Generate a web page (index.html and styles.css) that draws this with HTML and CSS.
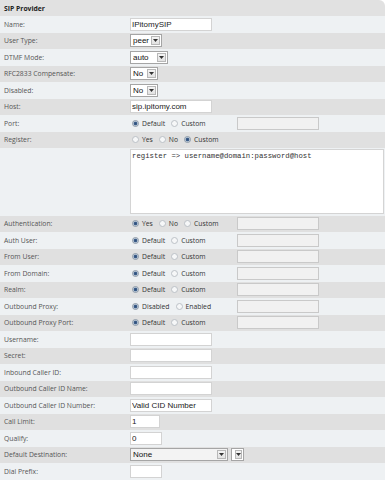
FILE: index.html
```html
<!DOCTYPE html>
<html>
<head>
<meta charset="utf-8">
<link rel="stylesheet" href="styles.css">
</head>
<body>
<div class="panel">
  <div class="panel-head">SIP Provider</div>
  <div class="row"><div class="label">Name:</div><div class="value"><input class="text w82" value="IPitomySIP"></div></div>
  <div class="row"><div class="label">User Type:</div><div class="value"><span class="select s-peer"><span class="sel-text">peer</span><span class="arrow"><svg width="5" height="3" viewBox="0 0 5 3"><path d="M0 0h5L2.5 3z" fill="#333"/></svg></span></span></div></div>
  <div class="row"><div class="label">DTMF Mode:</div><div class="value"><span class="select s-auto"><span class="sel-text">auto</span><span class="arrow"><svg width="5" height="3" viewBox="0 0 5 3"><path d="M0 0h5L2.5 3z" fill="#333"/></svg></span></span></div></div>
  <div class="row"><div class="label">RFC2833 Compensate:</div><div class="value"><span class="select s-no"><span class="sel-text">No</span><span class="arrow"><svg width="5" height="3" viewBox="0 0 5 3"><path d="M0 0h5L2.5 3z" fill="#333"/></svg></span></span></div></div>
  <div class="row"><div class="label">Disabled:</div><div class="value"><span class="select s-no"><span class="sel-text">No</span><span class="arrow"><svg width="5" height="3" viewBox="0 0 5 3"><path d="M0 0h5L2.5 3z" fill="#333"/></svg></span></span></div></div>
  <div class="row"><div class="label">Host:</div><div class="value"><input class="text w82" value="sip.ipitomy.com"></div></div>
  <div class="row"><div class="label">Port:</div><div class="value"><div class="radios"><span class="radio on"></span><span class="rl">Default</span><span class="radio"></span><span class="rl">Custom</span></div><input class="text w82 off"></div></div>
  <div class="row"><div class="label">Register:</div><div class="value"><div class="radios"><span class="radio"></span><span class="rl">Yes</span><span class="radio"></span><span class="rl">No</span><span class="radio on"></span><span class="rl">Custom</span></div></div></div>
  <div class="row tall"><div class="label"></div><div class="value"><textarea class="area">register =&gt; username@domain:password@host</textarea></div></div>
  <div class="row"><div class="label">Authentication:</div><div class="value"><div class="radios"><span class="radio on"></span><span class="rl">Yes</span><span class="radio"></span><span class="rl">No</span><span class="radio"></span><span class="rl">Custom</span></div><input class="text w82 off"></div></div>
  <div class="row"><div class="label">Auth User:</div><div class="value"><div class="radios"><span class="radio on"></span><span class="rl">Default</span><span class="radio"></span><span class="rl">Custom</span></div><input class="text w82 off"></div></div>
  <div class="row"><div class="label">From User:</div><div class="value"><div class="radios"><span class="radio on"></span><span class="rl">Default</span><span class="radio"></span><span class="rl">Custom</span></div><input class="text w82 off"></div></div>
  <div class="row"><div class="label">From Domain:</div><div class="value"><div class="radios"><span class="radio on"></span><span class="rl">Default</span><span class="radio"></span><span class="rl">Custom</span></div><input class="text w82 off"></div></div>
  <div class="row"><div class="label">Realm:</div><div class="value"><div class="radios"><span class="radio on"></span><span class="rl">Default</span><span class="radio"></span><span class="rl">Custom</span></div><input class="text w82 off"></div></div>
  <div class="row"><div class="label">Outbound Proxy:</div><div class="value"><div class="radios"><span class="radio on"></span><span class="rl">Disabled</span><span class="radio"></span><span class="rl">Enabled</span></div><input class="text w82 off"></div></div>
  <div class="row"><div class="label">Outbound Proxy Port:</div><div class="value"><div class="radios"><span class="radio on"></span><span class="rl">Default</span><span class="radio"></span><span class="rl">Custom</span></div><input class="text w82 off"></div></div>
  <div class="row"><div class="label">Username:</div><div class="value"><input class="text w82"></div></div>
  <div class="row"><div class="label">Secret:</div><div class="value"><input class="text w82"></div></div>
  <div class="row"><div class="label">Inbound Caller ID:</div><div class="value"><input class="text w82"></div></div>
  <div class="row"><div class="label">Outbound Caller ID Name:</div><div class="value"><input class="text w82"></div></div>
  <div class="row"><div class="label">Outbound Caller ID Number:</div><div class="value"><input class="text w82" value="Valid CID Number"></div></div>
  <div class="row"><div class="label">Call Limit:</div><div class="value"><input class="text w30" value="1"></div></div>
  <div class="row"><div class="label">Qualify:</div><div class="value"><input class="text w32" value="0"></div></div>
  <div class="row"><div class="label">Default Destination:</div><div class="value dest"><span class="select s-none"><span class="sel-text">None</span><span class="arrow"><svg width="5" height="3" viewBox="0 0 5 3"><path d="M0 0h5L2.5 3z" fill="#333"/></svg></span></span><span class="select s-empty"><span class="arrow"><svg width="5" height="3" viewBox="0 0 5 3"><path d="M0 0h5L2.5 3z" fill="#333"/></svg></span></span></div></div>
  <div class="row"><div class="label">Dial Prefix:</div><div class="value"><input class="text w32"></div></div>
</div>
</body>
</html>
```
FILE: styles.css
```css
html, body {
  margin: 0;
  padding: 0;
  background: #ffffff;
}
body {
  font-family: "Open Sans", "DejaVu Sans", sans-serif;
  font-size: 6.8px;
  color: #555;
}
.panel {
  width: 385px;
  display: flex;
  flex-direction: column;
}
.panel-head {
  height: 16px;
  background: #e1e1e1;
  border-top-right-radius: 6px;
  font-weight: bold;
  color: #222;
  padding-left: 4px;
  display: flex;
  align-items: center;
}
.row {
  display: grid;
  grid-template-columns: 130px 1fr;
  height: 16.5px;
  box-sizing: border-box;
  align-items: center;
  background: #e0e0e0;
}
.row:nth-child(even) {
  background: #eef1f3;
}
.row.tall {
  height: 67.5px;
}
.label {
  padding-left: 4px;
  white-space: nowrap;
}
.value {
  display: flex;
  align-items: center;
  height: 100%;
}
.text {
  box-sizing: border-box;
  height: 13px;
  border: 1px solid #d3d3d3;
  background: #fff;
  font-family: "Liberation Sans", Arial, sans-serif;
  font-size: 8px;
  color: #222;
  padding: 0 1px;
  margin: 0;
  outline: none;
}
.text.off {
  background: #f1f1f1;
  border-color: #c9c9c9;
}
.w82 { width: 82px; }
.w30 { width: 30px; }
.w32 { width: 32px; }
.radios {
  width: 107px;
  display: flex;
  align-items: center;
  color: #333;
}
.radio {
  box-sizing: border-box;
  width: 7px;
  height: 7px;
  border-radius: 50%;
  border: 1px solid #bcc1c7;
  background: #f6f7f8;
  margin: 0 3px 0 2px;
  flex: none;
}
.radio.on {
  border-color: #8d9aa8;
  background: radial-gradient(circle, #2f4e78 0, #3d5f8c 1.4px, #c3cfdc 2.2px);
}
.rl {
  margin-right: 4px;
}
.select {
  box-sizing: border-box;
  height: 13px;
  border: 1px solid #a5a5a5;
  background: #fff;
  display: flex;
  align-items: center;
  justify-content: space-between;
  font-family: "Liberation Sans", Arial, sans-serif;
  font-size: 8px;
  color: #111;
  padding-left: 2px;
  padding-right: 1px;
}
.s-peer { width: 32px; }
.s-auto { width: 38px; }
.s-no { width: 28px; }
.s-none { width: 98px; background: #f3f3f3; }
.s-empty { width: 13px; margin-left: 3px; padding-left: 1px; }
.arrow {
  box-sizing: border-box;
  width: 9px;
  height: 9px;
  border: 1px solid #b8b8b8;
  background: linear-gradient(#f4f4f4, #e2e2e2);
  display: flex;
  align-items: center;
  justify-content: center;
  margin-left: 2px;
}
.area {
  box-sizing: border-box;
  width: 254px;
  height: 65px;
  border: 1px solid #d4d4d4;
  background: #fff;
  font-family: "Liberation Mono", "Courier New", monospace;
  font-size: 7.3px;
  color: #333;
  padding: 2px 1px;
  margin: 0;
  resize: none;
  outline: none;
}
```
